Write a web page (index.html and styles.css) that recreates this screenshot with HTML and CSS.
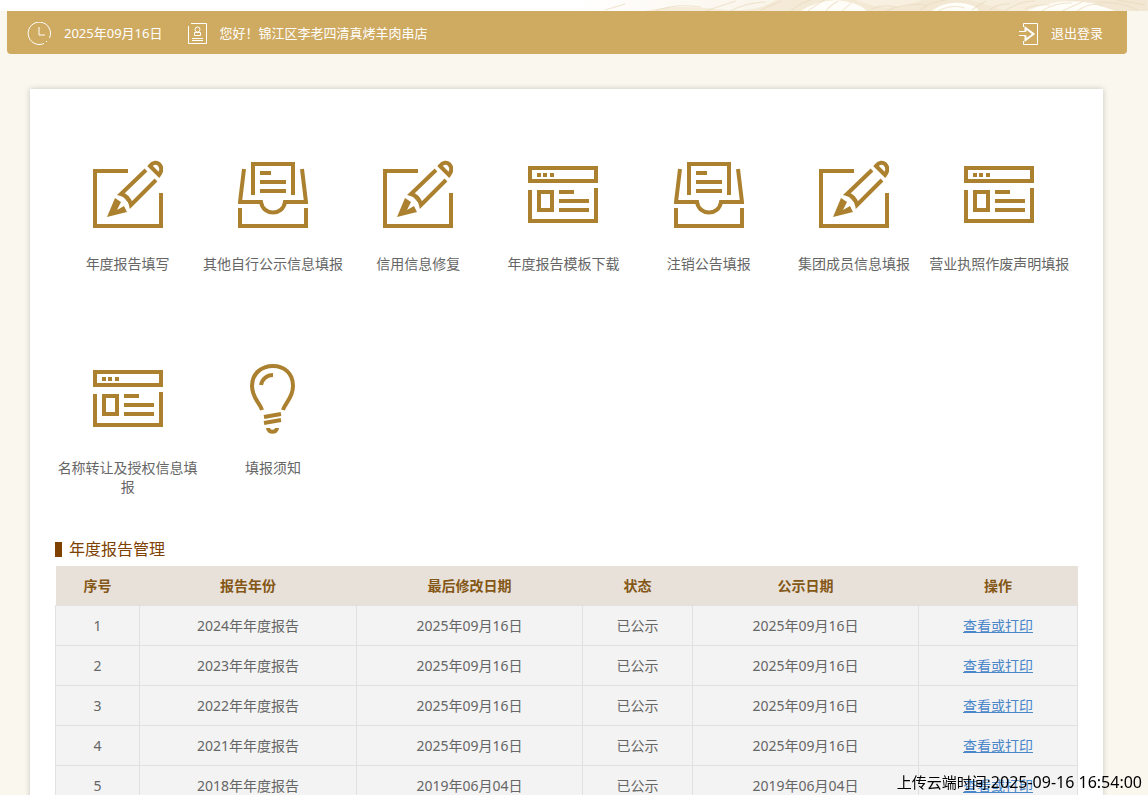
FILE: index.html
```html
<!DOCTYPE html>
<html lang="zh-CN">
<head>
    <meta charset="UTF-8">
    <meta name="viewport" content="width=device-width, initial-scale=1.0">
    <title>年度报告管理</title>
    <link rel="stylesheet" href="styles.css">
</head>
<body>
    <!-- shared icons -->
    <svg class="icon-defs" width="0" height="0">
        <symbol id="icon-write" viewBox="0 0 70 70">
            <path d="M35 11H2V66H68V33" />
            <path d="M53 10L28 34Q36 36 38 45L63 20" />
            <path class="fill" d="M22 38L28 42L24 50L31 46L34 52L14 57Z" />
            <path d="M28 34L38 45" class="thin" />
            <path d="M57 6C60 2 64 2 66 4C69 7 69 11 66 15Z" />
        </symbol>
        <symbol id="icon-tray" viewBox="0 0 70 70">
            <path d="M15 35V4H55V35" />
            <path d="M22 13H33M22 22H48M22 31H48" />
            <path d="M6 9L2 42H23C25 56 45 56 47 42H68L64 9" />
            <path d="M2 48V66H68V48" />
        </symbol>
        <symbol id="icon-page" viewBox="0 0 70 70">
            <path d="M2 8H68V21H2Z" />
            <path d="M9 15H13M15 15H19M22 15H26" />
            <path d="M2 30V61H68V28" />
            <path d="M11 32H24V50H11Z" />
            <path d="M31 32H46M31 41H61M31 50H61" />
        </symbol>
        <symbol id="icon-bulb" viewBox="0 0 70 70">
            <path d="M24 46C22 39 14 34 14 22C14 9 24 2 35 2C46 2 55 9 55 22C55 34 47 39 45 46" />
            <path d="M23 21C24 15 29 11 35 11" />
            <path d="M26 53L43 50M26 59L43 56" />
            <path d="M30 64C30 69 39 69 39 64" />
        </symbol>
    </svg>

    <div class="page">
        <!-- carved stone strip -->
        <div class="banner">
            <svg viewBox="0 0 560 11" preserveAspectRatio="none">
                <path class="shade" d="M60 11Q90 4 130 9T190 0H270Q300 14 330 2T410 8T480 0H560V11Z" />
                <path class="light" d="M215 11Q230 1 250 0Q275 3 280 11ZM345 11Q358 1 375 3Q390 5 392 11ZM440 11Q470 -3 505 3L528 11Z" />
                <path class="vein" d="M20 10L40 4M70 11Q90 3 115 7M120 11L150 1M145 11Q160 3 180 2M175 10L195 1M205 11Q215 2 225 0M222 11Q230 5 238 0M240 11Q243 6 252 1M256 11L265 3M285 9Q300 3 312 8M300 11Q320 2 340 5M333 11Q345 1 360 0M352 11Q364 4 378 8M385 10L399 1M402 11Q410 3 423 4M418 11Q432 1 448 1M438 9Q450 4 463 5M455 11Q468 2 485 3M475 11L495 2M490 11Q505 1 515 6M510 2Q535 2 550 10M530 0L558 5" />
            </svg>
        </div>

        <header class="topbar">
            <svg class="bar-icon" viewBox="0 0 24 24">
                <path d="M17 21.500A11.200 11.200 0 1 1 22.500 16M12 5V13H18M19 20L20 19" />
            </svg>
            <span class="date">2025年09月16日</span>
            <svg class="bar-icon" viewBox="0 0 24 24">
                <path d="M6 1.500H21.500V21.500H3.500V4M9.500 13.500V10.500H15.500V13.500ZM7 16.500H18M7 18.500H18" />
                <circle cx="12.500" cy="7.500" r="2.500" />
            </svg>
            <span class="user">您好！锦江区李老四清真烤羊肉串店</span>
            <a class="logout" href="#">
                <svg class="bar-icon" viewBox="0 0 24 24">
                    <path d="M7.500 5V1.500H21.500V22.500H7.500V19M3 9.500H9.500M3 13.500H9.500" />
                    <path class="arrow" d="M9.500 9.500V6L17.500 12L9.500 18V13.500" />
                </svg>
                退出登录
            </a>
        </header>

        <main class="panel">
            <nav class="menu">
                <a class="menu-item" href="#"><svg><use href="#icon-write" /></svg>年度报告填写</a>
                <a class="menu-item" href="#"><svg><use href="#icon-tray" /></svg>其他自行公示信息填报</a>
                <a class="menu-item" href="#"><svg><use href="#icon-write" /></svg>信用信息修复</a>
                <a class="menu-item" href="#"><svg><use href="#icon-page" /></svg>年度报告模板下载</a>
                <a class="menu-item" href="#"><svg><use href="#icon-tray" /></svg>注销公告填报</a>
                <a class="menu-item" href="#"><svg><use href="#icon-write" /></svg>集团成员信息填报</a>
                <a class="menu-item" href="#"><svg><use href="#icon-page" /></svg>营业执照作废声明填报</a>
                <a class="menu-item" href="#"><svg><use href="#icon-page" /></svg>名称转让及授权信息填报</a>
                <a class="menu-item" href="#"><svg><use href="#icon-bulb" /></svg>填报须知</a>
            </nav>

            <h2 class="title">年度报告管理</h2>
            <table class="report-table">
                <colgroup>
                    <col class="col-no"><col class="col-year"><col class="col-date">
                    <col class="col-status"><col class="col-date"><col class="col-action">
                </colgroup>
                <thead>
                    <tr><th>序号</th><th>报告年份</th><th>最后修改日期</th><th>状态</th><th>公示日期</th><th>操作</th></tr>
                </thead>
                <tbody>
                    <tr><td>1</td><td>2024年年度报告</td><td>2025年09月16日</td><td>已公示</td><td>2025年09月16日</td><td><a href="#">查看或打印</a></td></tr>
                    <tr><td>2</td><td>2023年年度报告</td><td>2025年09月16日</td><td>已公示</td><td>2025年09月16日</td><td><a href="#">查看或打印</a></td></tr>
                    <tr><td>3</td><td>2022年年度报告</td><td>2025年09月16日</td><td>已公示</td><td>2025年09月16日</td><td><a href="#">查看或打印</a></td></tr>
                    <tr><td>4</td><td>2021年年度报告</td><td>2025年09月16日</td><td>已公示</td><td>2025年09月16日</td><td><a href="#">查看或打印</a></td></tr>
                    <tr><td>5</td><td>2018年年度报告</td><td>2019年06月04日</td><td>已公示</td><td>2019年06月04日</td><td><a href="#">查看或打印</a></td></tr>
                </tbody>
            </table>
        </main>
    </div>

    <div class="upload-time">上传云端时间:<time>2025-09-16 16:54:00</time></div>
</body>
</html>
```
FILE: styles.css
```css
* { box-sizing: border-box; }
body { margin: 0; height: 100vh; overflow: hidden; background: #faf7ef; color: #666; font: 14px/19px "Noto Sans", "Noto Sans CJK SC", sans-serif; }
a { color: inherit; text-decoration: none; }
.icon-defs { position: absolute; }
.banner { display: flex; justify-content: flex-end; height: 11px; background: linear-gradient(to right, #fff 50%, #f8f0e1 75%, #f5ebd9); }
.banner svg { width: 49%; height: 11px; }
.banner path { fill: none; }
.banner .shade { fill: #f1e5ce; opacity: 0.7; }
.banner .light { fill: #fffdf8; }
.banner .vein { stroke: #e9dabd; stroke-width: 1; opacity: 0.7; }

/* top bar */
.topbar { display: flex; align-items: center; height: 43px; margin: 0 21px 0 7px; padding: 2px 24px 0 20px; background: #cfaa61; border-radius: 0 0 4px 4px; color: #fff; font-size: 13px; }
.bar-icon { width: 24px; height: 24px; fill: none; stroke: #fff; stroke-width: 1; }
.bar-icon .arrow { stroke-width: 2; }
.date { margin: 0 22px 0 13px; }
.user { margin-left: 11px; }
.logout { display: flex; align-items: center; gap: 11px; margin-left: auto; }

.panel { margin: 35px 45px 0 30px; padding: 52px 25px 0; background: #fff; box-shadow: 0 0 6px rgba(0,0,0,0.2); }

/* menu */
.menu { display: grid; grid-template-columns: repeat(7, 14.2%); grid-template-rows: 204px 196px; }
.menu-item { display: flex; flex-direction: column; align-items: center; text-align: center; padding-top: 19px; }
.menu-item svg { width: 70px; height: 70px; margin-bottom: 24px; flex: none; }
symbol path { fill: none; stroke: #ab8130; stroke-width: 4; }
symbol .fill { fill: #ab8130; stroke: none; }
symbol .thin { stroke-width: 1; }

.title { display: flex; align-items: center; gap: 7px; height: 17px; margin: 0 0 8px; color: #7e4100; font-size: 16px; font-weight: normal; }
.title::before { content: ""; width: 7px; height: 15px; background: #7e4100; }

/* reports */
.report-table { width: 100%; table-layout: fixed; border-collapse: collapse; text-align: center; }
.report-table th { height: 39px; padding: 0; background: #e8e1d9; color: #845716; }
.report-table td { height: 40px; padding: 0; background: #f3f3f3; border: 1px solid #e1e1e1; }
.report-table td a { color: #4a86c8; text-decoration: underline; }
.col-no { width: 84px; }
.col-year { width: 217px; }
.col-date { width: 226px; }
.col-status { width: 110px; }

.upload-time { position: fixed; right: 6px; bottom: 3px; color: #000; font-size: 15px; line-height: 20px; }
.upload-time time { font-size: 16px; }
```
